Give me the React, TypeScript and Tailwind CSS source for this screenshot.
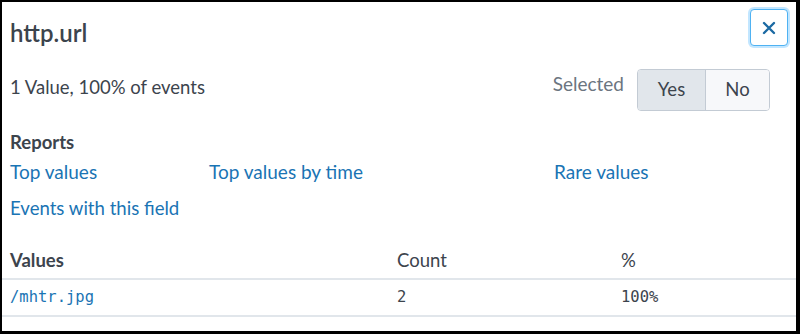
import React from "react";

export default function App() {
  return (
    <div className="box-border w-[800px] h-[334px] border-l-2 border-t-2 border-r-4 border-b-[3px] border-black bg-white font-['Lato',sans-serif] text-[#3c444d] overflow-hidden">
      {/* header */}
      <div className="flex justify-between items-start pl-2 pr-2 pt-[7px] h-[46px]">
        <div className="mt-[8px] text-[24px] leading-[32px] font-semibold">http.url</div>
        <button className="w-[38px] h-[37px] rounded-[4px] border border-[#4fb2f2] bg-white shadow-[0_0_0_2px_rgba(120,200,255,0.45)] flex items-center justify-center">
          <svg width="14" height="14" viewBox="0 0 14 14" fill="none" stroke="#1b6aa3" strokeWidth="2.4" strokeLinecap="round">
            <path d="M2 2 L12 12 M12 2 L2 12" />
          </svg>
        </button>
      </div>
      {/* summary row */}
      <div className="flex justify-between items-start pl-2 pr-[26px] h-[63px]">
        <div className="mt-[27px] text-[18.5px] leading-[24px]">1 Value, 100% of events</div>
        <div className="flex items-start gap-[13px]">
          <div className="mt-[24px] text-[19px] leading-[24px] text-[#6b7580]">Selected</div>
          <div className="mt-[21px] flex h-[42px] rounded-[4px] border border-[#c3cbd4] overflow-hidden text-[18.5px]">
            <div className="w-[68px] flex items-center justify-center bg-[#e1e6eb] border-r border-[#c3cbd4]">Yes</div>
            <div className="w-[63px] flex items-center justify-center bg-[#f7f8fa]">No</div>
          </div>
        </div>
      </div>
      {/* reports */}
      <div className="pl-2 mt-[19px] text-[18.5px] leading-[24px] font-bold">Reports</div>
      <div className="pl-2 mt-[6px] grid grid-cols-[199px_345px_1fr] text-[19px] leading-[24px] text-[#1a74b4]">
        <span>Top values</span>
        <span>Top values by time</span>
        <span>Rare values</span>
      </div>
      <div className="pl-2 mt-[12px] text-[18.6px] leading-[24px] text-[#1a74b4]">Events with this field</div>
      {/* table */}
      <div className="mt-[28px]">
        <div className="grid grid-cols-[387px_224px_1fr] pl-2 pb-[6px] border-b-2 border-[#e1e6eb] text-[18.5px] leading-[24px]">
          <span className="font-bold">Values</span>
          <span>Count</span>
          <span>%</span>
        </div>
        <div className="grid grid-cols-[387px_224px_1fr] items-center pl-2 h-[37px] border-b-2 border-[#e1e6eb] font-['DejaVu_Sans_Mono',monospace] text-[15.5px]">
          <span className="text-[#1a74b4]">/mhtr.jpg</span>
          <span>2</span>
          <span>100%</span>
        </div>
      </div>
    </div>
  );
}
